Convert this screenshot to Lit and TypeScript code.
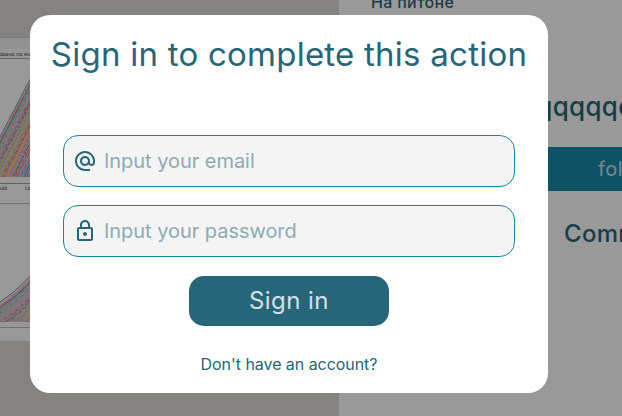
import { LitElement, html, css, svg } from "lit";
import { customElement } from "lit/decorators.js";

const COLORS = ["#2f5878", "#a5703a", "#3f7d45", "#8f3f48", "#71558a", "#5e4842", "#9a5f8b", "#777777", "#83853f", "#2f8290"];

/** Dense bundle of coloured traces between an upper envelope and the chart baseline. */
function traces(id: string, top: (x: number) => number, base: number) {
  const out = [];
  let seed = 7;
  const rnd = () => (seed = (seed * 16807) % 2147483647) / 2147483647;
  let area = `M-1 ${base}`;
  for (let x = -1; x <= 31; x += 2) area += `L${x} ${top(x) + 3}`;
  area += `L31 ${base}Z`;
  out.push(svg`<clipPath id=${id}><rect width="30" height=${base} /></clipPath>`);
  out.push(svg`<path d=${area} fill="#81767b" />`);
  for (let i = 0; i < 60; i++) {
    let d = "";
    for (let x = -1; x <= 31; x += 2) {
      const y = top(x) + i * 1.9 + (rnd() - 0.5) * (i ? 1.8 : 0.4);
      d += `${d ? "L" : "M"}${x} ${y.toFixed(1)}`;
    }
    const dash = i > 4 ? `${2 + Math.floor(rnd() * 4)} ${1 + Math.floor(rnd() * 3)}` : "none";
    out.push(svg`<path d=${d} stroke=${COLORS[Math.floor(i ? rnd() * 10 : 0)]} fill="none" stroke-width="1" stroke-dasharray=${dash} />`);
  }
  return svg`<g clip-path="url(#${id})">${out}</g>`;
}

@customElement("app-root")
export class AppRoot extends LitElement {
  static styles = css`
    :host {
      display: block;
      position: relative;
      height: 416px;
      overflow: hidden;
      font-family: Inter, sans-serif;
      color: #266678;
    }
    .page { display: grid; grid-template-columns: 339px 1fr; height: 100%; background: #999; }
    .left { background: #858381; padding-top: 37px; }
    .plot { display: block; }
    .right { color: #173d48; overflow: hidden; white-space: nowrap; display: flex; flex-direction: column; }
    .topic { margin: -8px 0 0 32px; font-size: 16px; line-height: 20px; font-weight: 500; letter-spacing: 0.3px; }
    .name { margin: 79px 0 0 181px; font-size: 26px; line-height: 32px; font-weight: 500; letter-spacing: 0.3px; }
    .follow { margin-top: 24px; height: 44px; background: #0e5266; color: #7d878d; font-size: 20px; line-height: 44px; padding-left: 259px; letter-spacing: 0.5px; }
    .comments { margin: 28px 0 0 225px; font-size: 24px; line-height: 30px; font-weight: 500; letter-spacing: 0.3px; }
    .overlay { position: absolute; inset: 15px 74px 23px 30px; }
    .modal {
      height: 100%; box-sizing: border-box; background: #fff; border-radius: 20px;
      display: flex; flex-direction: column; align-items: center; white-space: nowrap;
    }
    .title { margin: 19px 0 0; font-size: 33px; line-height: 40px; font-weight: 420; letter-spacing: 0.24px; }
    .fields { margin-top: 61px; display: flex; flex-direction: column; gap: 18px; }
    .field {
      box-sizing: border-box; width: 452px; height: 52px; border: 1px solid #1687a7; border-radius: 15px;
      background: #f4f4f4; display: flex; align-items: center; padding-left: 9px; gap: 7px;
      font-size: 20px; letter-spacing: -0.04px; color: #8eabb4;
    }
    .icon { width: 24px; height: 24px; fill: #266678; }
    .submit {
      margin-top: 19px; width: 200px; height: 50px; border: 0; border-radius: 15px; background: #266678;
      color: #d3e0ea; font: 400 24px/50px Inter, sans-serif; letter-spacing: 0.45px; padding: 0;
    }
    .switch { margin-top: 28px; font-size: 16px; line-height: 20px; letter-spacing: -0.05px; }
  `;

  render() {
    return html`
      <div class="page">
        <div class="left">
          <svg class="plot" width="30" height="304" viewBox="0 37 30 304" font-family="DejaVu Sans">
            <rect y="37" width="30" height="304" fill="#989898" />
            <rect y="37" width="30" height="1" fill="#777" />
            <rect y="38" width="30" height="11" fill="#929292" />
            <text x="-1" y="56" font-size="5.6" textLength="32" lengthAdjust="spacingAndGlyphs" fill="#222">овано по ма</text>
            <rect y="58" width="30" height="1" fill="#666" />
            ${traces("upper", (x) => 137 - x * 1.92, 177)}
            <rect y="183" width="30" height="1" fill="#606060" />
            <text x="-1.500" y="189.500" font-size="4.600" fill="#222">500</text>
            <text x="24.500" y="189.500" font-size="4.600" fill="#222">1000</text>
            <rect y="203" width="30" height="1" fill="#707070" />
            ${traces("lower", (x) => 302 - x * 0.65 - x * x * 0.007, 322)}
            <rect y="327" width="30" height="1" fill="#707070" />
          </svg>
        </div>
        <div class="right">
          <div class="topic">На питоне</div>
          <div class="name">qqqqqqqq</div>
          <div class="follow">follow</div>
          <div class="comments">Comments</div>
        </div>
      </div>
      <div class="overlay">
        <div class="modal">
          <h1 class="title">Sign in to complete this action</h1>
          <div class="fields">
            <div class="field">
              <svg class="icon" viewBox="0 0 24 24"><path d="M12 2C6.480 2 2 6.480 2 12s4.480 10 10 10h5v-2h-5c-4.340 0-8-3.660-8-8s3.660-8 8-8 8 3.660 8 8v1.430c0 .79-.71 1.570-1.500 1.570s-1.500-.78-1.500-1.570V12c0-2.760-2.240-5-5-5s-5 2.240-5 5 2.240 5 5 5c1.380 0 2.640-.56 3.540-1.470.65.89 1.770 1.470 2.960 1.470 1.970 0 3.500-1.600 3.500-3.570V12c0-5.520-4.480-10-10-10zm0 13c-1.660 0-3-1.340-3-3s1.340-3 3-3 3 1.340 3 3-1.340 3-3 3z" /></svg>
              <span>Input your email</span>
            </div>
            <div class="field">
              <svg class="icon" viewBox="0 0 24 24"><path d="M18 8h-1V6c0-2.760-2.240-5-5-5S7 3.240 7 6v2H6c-1.100 0-2 .9-2 2v10c0 1.100.9 2 2 2h12c1.100 0 2-.9 2-2V10c0-1.100-.9-2-2-2zM9 6c0-1.660 1.340-3 3-3s3 1.340 3 3v2H9V6zm9 14H6V10h12v10zm-6-3c1.100 0 2-.9 2-2s-.9-2-2-2-2 .9-2 2 .9 2 2 2z" /></svg>
              <span>Input your password</span>
            </div>
          </div>
          <button class="submit">Sign in</button>
          <div class="switch">Don't have an account?</div>
        </div>
      </div>
    `;
  }
}
